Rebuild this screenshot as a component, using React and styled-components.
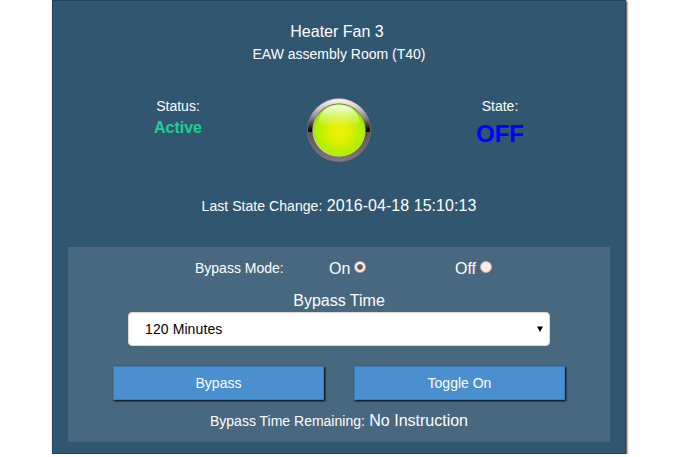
import React, { useState } from 'react';
import styled, { createGlobalStyle } from 'styled-components';

const GlobalStyle = createGlobalStyle`
  * { box-sizing: border-box; }
  body {
    margin: 0;
    background: #fff;
    color: #fff;
    font: 16px/20px "Liberation Sans", Arial, sans-serif;
    overflow: hidden;
  }
`;

const Card = styled.main`
  display: flex;
  flex-direction: column;
  width: 574px;
  height: 454px;
  margin-left: 52px;
  padding: 21px 15px 0;
  background: #31566f;
  border: 1px solid #1a4564;
  box-shadow: 1px 1px 2px #3a2a2a;
`;

const Header = styled.header`
  display: flex;
  flex-direction: column;
  align-items: center;
  gap: 2px;
  width: 542px;
`;

const Title = styled.div`
  padding-right: 4px;
  font-size: 16px;
`;

const Small = styled.span`
  font-size: 14px;
`;

const Readouts = styled.section`
  display: grid;
  grid-template-columns: repeat(3, 161px);
  justify-content: center;
  width: 542px;
  height: 66px;
  margin-top: 32px;
`;

const Readout = styled.div`
  display: flex;
  flex-direction: column;
  align-items: center;
`;

const LampSlot = styled(Readout)`
  padding-top: 1px;
`;

const Value = styled.strong`
  margin-top: 1px;
  font-size: ${(p) => p.$size}px;
  line-height: ${(p) => p.$line}px;
  color: ${(p) => p.$color};
`;

const Changed = styled.div`
  width: 542px;
  margin-top: 34px;
  text-align: center;
  letter-spacing: 0.05px;
`;

const Panel = styled.section`
  display: flex;
  flex-direction: column;
  align-items: center;
  width: 542px;
  height: 195px;
  margin-top: 31px;
  padding-top: 12px;
  background: #48687f;
`;

const ModeRow = styled.div`
  display: grid;
  grid-template-columns: 134px 126px 60px;
  width: 288px;
  height: 20px;
`;

const ModeLabel = styled(Small)`
  line-height: 18px;
`;

const Choice = styled.label`
  display: flex;
  align-items: flex-start;
  gap: 4px;
`;

const Radio = styled.input`
  appearance: none;
  width: 12px;
  height: 12px;
  margin: 2px 0 0;
  border-radius: 50%;
  background: #fcece5;
  border: 1px solid #b5acaa;
  &:checked {
    background: radial-gradient(circle, #625b5a 0 2.3px, #fcece5 3.4px);
  }
`;

const TimeLabel = styled.label`
  margin-top: 12px;
`;

const SelectBox = styled.div`
  display: flex;
  align-items: center;
  justify-content: space-between;
  width: 422px;
  height: 34px;
  margin-top: 1px;
  padding: 0 5px 0 16px;
  border: 1px solid #e2d5d0;
  border-radius: 4px;
  background: #fff;
  color: #000;
  font-size: 14px;
  letter-spacing: 0.1px;
`;

const Buttons = styled.div`
  display: flex;
  gap: 30px;
  margin-top: 20px;
`;

const Button = styled.button`
  width: 211px;
  height: 34px;
  padding: 0;
  border: 1px solid #3a7dbb;
  background: #4a8fce;
  color: #fff;
  font: 14px/20px "Liberation Sans", Arial, sans-serif;
  box-shadow: 1px 1px 2px #000;
`;

const Remaining = styled.div`
  margin-top: 11px;
`;

function Lamp() {
  return (
    <svg width="66" height="66" viewBox="0 0 66 66" aria-hidden="true">
      <defs>
        <linearGradient id="rim" x1="0" y1="0" x2="0" y2="1">
          <stop offset="0" stopColor="#fff4f0" />
          <stop offset=".12" stopColor="#dcd3d2" />
          <stop offset=".3" stopColor="#8f8786" />
          <stop offset=".5" stopColor="#0c0808" />
          <stop offset=".53" stopColor="#120e0e" />
          <stop offset=".54" stopColor="#5d5655" />
          <stop offset="1" stopColor="#817876" />
        </linearGradient>
        <linearGradient id="bezel" x1="0" y1="0" x2="0" y2="1">
          <stop offset="0" stopColor="#4c4432" />
          <stop offset=".5" stopColor="#c9c9a8" />
          <stop offset="1" stopColor="#eee7df" />
        </linearGradient>
        <radialGradient id="glass" cx=".5" cy=".53" r=".55">
          <stop offset="0" stopColor="#f2f000" />
          <stop offset=".35" stopColor="#e0f000" />
          <stop offset=".85" stopColor="#a9f000" />
          <stop offset="1" stopColor="#86d400" />
        </radialGradient>
        <linearGradient id="shine" x1="0" y1="0" x2="0" y2="1">
          <stop offset="0" stopColor="#fff" stopOpacity=".95" />
          <stop offset=".5" stopColor="#fff" stopOpacity=".42" />
          <stop offset="1" stopColor="#fff" stopOpacity="0" />
        </linearGradient>
      </defs>
      <circle cx="33" cy="33" r="31.5" fill="url(#rim)" stroke="#8c8482" strokeWidth=".6" />
      <circle cx="33" cy="33" r="26.6" fill="url(#bezel)" />
      <circle cx="33" cy="33" r="25.9" fill="url(#glass)" />
      <path d="M12.5 25C14 14 22 7.8 33 7.8S52 14 53.5 25C52 31 14 31 12.5 25z" fill="url(#shine)" />
    </svg>
  );
}

export default function App() {
  const [mode, setMode] = useState('on');
  return (
    <>
      <GlobalStyle />
      <Card>
        <Header>
          <Title>Heater Fan 3</Title>
          <Small>EAW assembly Room (T40)</Small>
        </Header>
        <Readouts>
          <Readout>
            <Small>Status:</Small>
            <Value $size={16} $line={22} $color="#20cf95">Active</Value>
          </Readout>
          <LampSlot>
            <Lamp />
          </LampSlot>
          <Readout>
            <Small>State:</Small>
            <Value $size={24} $line={34} $color="#0000ff">OFF</Value>
          </Readout>
        </Readouts>
        <Changed>
          <Small>Last State Change:</Small> 2016-04-18 15:10:13
        </Changed>
        <Panel>
          <ModeRow>
            <ModeLabel>Bypass Mode:</ModeLabel>
            <Choice>
              On
              <Radio type="radio" name="mode" checked={mode === 'on'} onChange={() => setMode('on')} />
            </Choice>
            <Choice>
              Off
              <Radio type="radio" name="mode" checked={mode === 'off'} onChange={() => setMode('off')} />
            </Choice>
          </ModeRow>
          <TimeLabel>Bypass Time</TimeLabel>
          <SelectBox role="combobox">
            120 Minutes
            <svg width="7" height="7" viewBox="0 0 7 7" aria-hidden="true">
              <path d="M0 .5h6L3 6z" fill="#000" />
            </svg>
          </SelectBox>
          <Buttons>
            <Button>Bypass</Button>
            <Button>Toggle On</Button>
          </Buttons>
          <Remaining>
            <Small>Bypass Time Remaining:</Small> No Instruction
          </Remaining>
        </Panel>
      </Card>
    </>
  );
}
